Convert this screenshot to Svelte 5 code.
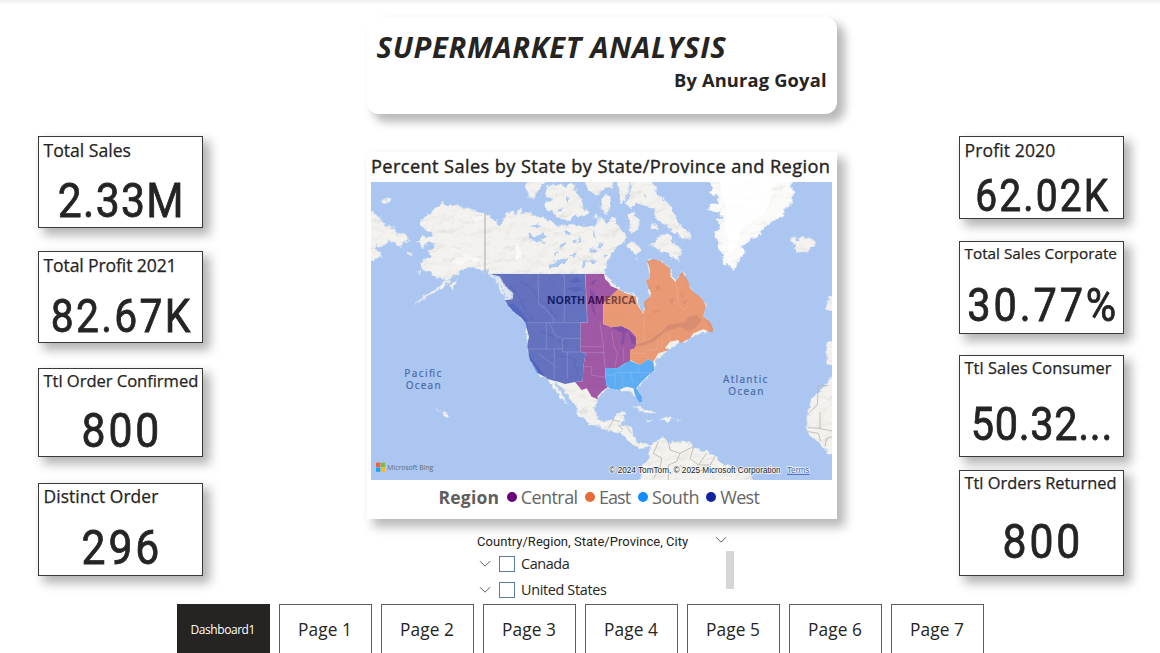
<script>
  // y positions: card top edge and height, label baseline, figure cap height and baseline
  const left = [
    { label: 'Total Sales', w: 87, size: 17.6, lb: 157, value: '2.33M', vw: 126, cap: 34.5, vb: 218.3, top: 136.4, h: 91.6 },
    { label: 'Total Profit 2021', w: 133, size: 17.6, lb: 272, value: '82.67K', vw: 140, cap: 33, vb: 332.3, top: 251.4, h: 91.6 },
    { label: 'Ttl Order Confirmed', w: 155, size: 16.6, lb: 387, value: '800', vw: 78, cap: 34.5, vb: 447.8, top: 367.6, h: 89.4 },
    { label: 'Distinct Order', w: 115, size: 17.4, lb: 503, value: '296', vw: 78, cap: 34.5, vb: 565.3, top: 483, h: 93 }
  ];
  const right = [
    { label: 'Profit 2020', w: 91, size: 17.6, lb: 157, value: '62.02K', vw: 133, cap: 31.5, vb: 211.3, top: 136.4, h: 82.6 },
    { label: 'Total Sales Corporate', w: 152, size: 15.3, lb: 259.3, value: '30.77%', vw: 149, cap: 33.5, vb: 321.5, top: 241.4, h: 92.6 },
    { label: 'Ttl Sales Consumer', w: 147, size: 16.4, lb: 374, value: '50.32...', vw: 142, cap: 33.5, vb: 440.5, top: 355.4, h: 101.6 },
    { label: 'Ttl Orders Returned', w: 152, size: 16.4, lb: 489, value: '800', vw: 78, cap: 34.5, vb: 558.5, top: 470.4, h: 105.2 }
  ];
  const legend = [
    { name: 'Central', color: '#6b007b', w: 57.5, m: 0 },
    { name: 'East', color: '#e66c37', w: 32, m: 7 },
    { name: 'South', color: '#118dff', w: 47.5, m: 7 },
    { name: 'West', color: '#12239e', w: 40, m: 7 }
  ];
  const places = [{ name: 'Canada', w: 49 }, { name: 'United States', w: 86 }];
  const pages = [1, 2, 3, 4, 5, 6, 7];

  // Spreads the letters so that the text takes the given width.
  function fit(node, { w, sx = 1 }) {
    const n = node.textContent.length;
    const ls = (w / sx - node.offsetWidth) / (n - 1);
    node.style.letterSpacing = ls + 'px';
    node.style.marginRight = -ls + 'px';
  }
  const gap = (list, i) => (i ? list[i].top - list[i - 1].top - list[i - 1].h : list[0].top);
  const labelTop = (c) => c.lb - c.top - 1 - 12 - 0.388 * c.size;
  const valueTop = (c) => c.vb - c.top - 1 - 24 - labelTop(c) - (0.8418 * c.cap) / 0.711;
</script>

{#snippet cards(list)}
  <div class="column">
    {#each list as c, i}
      <section class="card" style="margin-top:{gap(list, i)}px;height:{c.h}px">
        <div class="label" style="margin-top:{labelTop(c)}px;font-size:{c.size}px"><span use:fit={{ w: c.w }}>{c.label}</span></div>
        <div class="value" style="margin-top:{valueTop(c)}px;font-size:{c.cap / 0.711}px"><span use:fit={{ w: c.vw, sx: 0.88 }}>{c.value}</span></div>
      </section>
    {/each}
  </div>
{/snippet}

{#snippet chevron()}
  <svg class="chev" width="12" height="8" viewBox="0 0 12 8"><path d="M1 1.2 6 6.2 11 1.2" /></svg>
{/snippet}

<main>
  <div class="board">
    {@render cards(left)}

    <div class="center">
      <header>
        <h1><span use:fit={{ w: 349 }}>SUPERMARKET ANALYSIS</span></h1>
        <p><span use:fit={{ w: 152.5 }}>By Anurag Goyal</span></p>
      </header>

      <section class="mapcard">
        <h2><span use:fit={{ w: 459 }}>Percent Sales by State by State/Province and Region</span></h2>
        <svg class="map" width="461" height="298" viewBox="33 111 1383 894" preserveAspectRatio="none">
          <defs>
            <filter id="coast" x="-5%" y="-5%" width="110%" height="110%">
              <feTurbulence type="fractalNoise" baseFrequency="0.06" numOctaves="3" seed="4" result="n" />
              <feDisplacementMap in="SourceGraphic" in2="n" scale="20" xChannelSelector="R" yChannelSelector="G" />
            </filter>
            <filter id="relief" x="0" y="0" width="100%" height="100%">
              <feTurbulence type="fractalNoise" baseFrequency="0.018 0.035" numOctaves="3" seed="9" result="t" />
              <feDiffuseLighting in="t" surfaceScale="9" diffuseConstant="1.08" lighting-color="#ffffff" result="l">
                <feDistantLight azimuth="235" elevation="65" />
              </feDiffuseLighting>
              <feComposite in="l" in2="SourceAlpha" operator="in" />
            </filter>
            <g id="land">
              <path d="M20 195 60 215 75 240 100 250 110 265 135 265 148 280 140 290 125 290 130 303 115 305 100 290 85 285 75 300 60 308 50 300 40 308 65 325 65 340 20 350ZM62 170 75 160 90 168 80 175Z" />
              <path d="M178 230 195 220 205 205 225 195 240 182 250 170 262 182 290 180 320 190 350 200 375 207 395 215 410 235 425 245 430 225 440 205 455 200 465 210 480 190 490 205 515 200 520 215 550 215 575 235 610 243 640 240 660 245 690 240 705 240 712 222 722 215 740 235 755 222 768 218 770 240 790 262 800 272 790 290 770 305 755 330 740 345 735 387 735 400 400 400 385 380 360 377 340 367 325 370 300 377 295 390 280 394 265 405 250 400 235 402 225 398 215 385 190 375 180 355 195 345 215 335 205 320 225 300 210 290 190 305 170 290 185 275 205 280 220 270 205 255 185 245Z" />
              <path d="M265 403 270 412 250 428 225 440 195 460 160 481 190 455 225 432 248 410ZM268 420 285 405 288 420 275 432ZM170 380 182 376 180 386ZM135 325 155 322 158 330 145 332Z" />
              <path d="M500 105 560 105 545 125 535 140 525 145 520 165 505 155 497 135ZM555 150 565 120 600 118 615 125 635 111 650 135 665 165 670 190 690 200 675 215 650 210 630 225 600 225 580 205 560 195 555 175 575 165ZM675 105 765 105 755 125 735 130 715 150 700 145 680 130ZM725 160 740 145 752 165 752 185 738 208 722 195ZM700 205 716 210 712 225 700 220ZM775 105 810 105 805 140 795 165 785 180 775 160Z" />
              <path d="M815 105 870 105 885 130 895 150 915 165 930 180 940 190 935 205 955 225 960 240 975 255 990 262 985 280 970 285 955 265 935 260 930 245 905 235 890 215 880 195 850 180 830 175 815 190 800 175 810 150ZM805 215 820 200 835 225 835 255 815 265 805 245ZM800 300 815 285 835 305 845 320 825 330 805 310ZM825 340 832 336 830 345ZM873 237 892 235 890 255 875 255ZM865 300 890 290 905 265 930 270 945 300 965 310 965 325 950 335 960 345 935 340 925 325 905 320 885 303Z" />
              <path class="ice" d="M1045 105H1295L1300 150 1295 180 1280 190 1270 215 1250 220 1230 235 1210 250 1195 275 1170 285 1150 300 1155 325 1140 340 1130 365 1120 375 1105 360 1090 355 1085 330 1075 310 1080 290 1060 275 1065 260 1080 255 1072 225 1085 220 1080 200 1060 205 1045 190 1055 175 1075 170 1070 150 1050 145 1060 130Z" />
              <path d="M1292 280 1305 275 1308 285 1325 280 1345 275 1360 282 1367 295 1355 310 1330 325 1310 320 1300 308 1305 297 1290 290ZM1397 475 1410 455 1430 455V495H1402ZM1400 595 1430 590V660L1400 655Z" />
              <path d="M400 387 735 387 780 435 830 455 850 507 870 455 860 408 870 400 862 348 900 347 930 370 947 412 967 381 990 430 1037 480 1030 515 1060 553 990 580 925 610 883 655 883 675 828 730 847 770 825 750 775 733 742 727 714 763 705 790 710 815 735 830 760 825 768 805 793 802 790 820 785 838 815 845 820 870 835 895 860 895 868 907 840 912 805 890 785 865 750 857 690 838 650 805 650 785 625 755 600 725 580 708 612 755 622 782 605 765 585 735 565 703 535 685 503 620 498 535 440 475Z" />
              <path d="M868 900 895 882 910 880 930 890 980 890 1000 905 1040 922 1070 935 1080 955 1130 970 1170 990 1190 1020H835L845 985 850 960 868 935ZM1430 690 1405 700 1400 720 1375 738 1355 765 1340 805 1342 850 1345 868 1375 892 1400 918 1430 940Z" />
              <path d="M815 784 845 786 875 798 892 807 870 808 845 797ZM900 824 920 812 945 820 925 829ZM862 823 880 825 865 830ZM953 823 963 827 953 829ZM248 800 256 802 268 813 260 819ZM228 793 236 796 230 798Z" />
            </g>
          </defs>
          <rect x="33" y="111" width="1383" height="894" fill="#abc7f1" />
          <g filter="url(#coast)">
            <use href="#land" fill="#f3f2ee" stroke="#c4d6f2" stroke-width="2" />
            <use href="#land" filter="url(#relief)" style="mix-blend-mode:multiply" opacity=".28" />
            <path d="M1080 105H1255L1235 150 1225 190 1190 220 1150 250 1130 300 1105 335 1100 280 1095 240 1100 190 1088 150Z" fill="#fff" opacity=".85" />
            <path d="M335 222 375 208 378 218 345 232ZM465 290 480 300 485 340 468 345ZM275 350 320 325 360 345 370 358 330 345 290 362Z" fill="#fff" opacity=".55" />
            <g fill="#aec9f1">
              <path d="M505 265 525 275 550 262 560 275 540 285 555 298 525 290 500 275ZM515 240 530 235 545 243 530 250ZM565 360 590 345 625 340 620 352 595 360 570 375ZM600 300 612 285 618 300 605 310ZM655 270 665 290 655 300ZM610 255 635 260 620 270ZM630 330 650 322 640 338ZM690 310 712 318 700 325ZM680 350 715 345 700 355ZM715 290 728 300 718 308ZM665 370 675 340 680 365ZM700 262 710 268 700 275Z" />
              <path d="M590 195 610 190 605 200ZM850 145 865 160 855 162ZM620 150 628 170 618 165ZM730 330 745 326 735 340ZM583 325 592 318 590 335ZM640 290 648 280 650 295Z" />
            </g>
          </g>
          <g class="borders">
            <path d="M375 207V378" stroke="#a9a9a7" stroke-width="3" />
            <path d="M745 850 760 825 780 830M790 855 775 840M800 845 815 865M895 890 880 925 905 940 900 970 880 1000M925 890 930 915 960 925 1000 905M960 925 950 950 925 960 925 1005M1000 910 990 940 1015 960 1040 925M1015 960 1050 960 1065 935M960 960 990 980 1030 975" />
            <path d="M1405 722H1375L1372 780 1345 805M1380 800V850L1345 848M1345 860 1375 865 1382 890M1375 850 1416 858M1395 905 1400 880 1416 875" />
          </g>

          <g opacity=".82">
            <path fill="#4656b6" d="M390 387H676L682 533H662V621L677 623 670 665 668 709 645 711 615 717 595 710 565 703 555 695 535 685 525 665 510 645 505 620 502 600 507 575 500 550 498 535 480 515 460 500 440 475 435 465 457 463 460 445 435 425 420 395Z" />
            <path fill="#8f3896" d="M676 387H732L735 402 748 415 752 423 775 433 730 475V537L755 547 785 543 810 555 828 575 830 600 822 612 810 615V650L795 655 772 670H735L738 715 742 727 725 740 712 755 714 763 695 755 680 730 665 735 655 723 645 711 668 709 670 665 677 623 662 621V533H682Z" />
            <path fill="#e8875a" d="M775 433 795 445 815 450 828 455 830 475 842 495 850 507 855 490 852 470 870 455 873 445 865 425 858 408 870 400V375L862 348 880 343 900 347 912 357 930 370 932 395 947 412 960 390 967 381 985 410 990 430 1005 445 1025 460 1037 480 1030 515 1050 530 1060 553 1057 563 1030 553 1000 565 990 580 960 595 955 585 930 590 915 608 925 615 895 625 880 650 865 643 840 660 810 645V615L822 612 830 600 828 575 810 555 785 543 755 547 730 537V475Z" />
            <path fill="#3d9ff7" d="M810 647 840 660 865 643 880 650 883 675 860 695 845 710 828 730 845 755 847 770 838 772 825 750 820 730 800 725 775 735 742 727 738 715 735 668 772 670 795 655Z" />
          </g>
          <path d="M440 480 460 475 485 500 503 528 500 545 490 520 465 500ZM505 625 520 650 540 672 555 695 530 683 510 645Z" fill="#3f5bc4" opacity=".45" />
          <path d="M755 547 785 543 808 558 795 565 792 595 783 600 788 565ZM805 560 826 576 828 598 815 595ZM690 430 705 445 700 480 710 515 695 495ZM690 412 710 402 700 420Z" fill="#5c3aa6" opacity=".35" />
          <path d="M825 600 870 585 905 560 925 540 975 530 985 515 1010 510 1025 525 1005 550 985 560 960 545 915 560 880 590 840 605Z" fill="#a8686c" opacity=".25" />
          <path d="M625 410 650 395 665 410 645 415ZM620 430 655 425 670 435 640 440Z" fill="#3448b0" opacity=".25" />
          <path d="M885 425 900 418 895 440ZM925 465 945 460 935 480ZM960 440 975 460 965 455ZM965 470 980 465 975 480ZM875 500 900 495 890 505Z" fill="#a8686c" opacity=".2" />
          <path class="shade" d="M485 410 515 430 530 455 560 480 590 520M450 420 480 460 500 500 520 525M545 560 580 575 620 600M520 655 550 690M590 630 640 640 655 690" />
          <path class="states" d="M498 533H682M534 387 536 475 560 495 580 520 580 533M613 387V533M676 387 682 533M559 533V612M503 612H607M568 533 580 560 590 580 605 572M607 580H662M607 580V621H662M583 612V660L582 700M622 621V700M583 662 535 625M662 605H725M677 623H735M670 665H695M720 533 730 600 735 668M755 560 762 605 772 625 765 668M790 610V650M695 665V690L735 697M735 690H765M765 683V727M785 685 790 727M810 680 820 715M770 683H880M795 655 770 683M830 665 840 685M810 625H860M850 615H890L895 590M855 630 870 645M905 580V610M925 565 930 590M852 507V590M950 430 955 480 975 495 985 480M950 430 945 412" />
          <path class="bc" d="M403 392 418 396 428 413 442 430 457 444 455 460 440 458 430 443 424 424 408 412Z" />

          <g class="name" font-size="34">
            <text x="561" y="478" textLength="114" lengthAdjust="spacingAndGlyphs">NORTH</text>
            <text x="683" y="478" textLength="50" lengthAdjust="spacingAndGlyphs" fill="#40104f">AM</text>
            <text x="734" y="478" textLength="93" lengthAdjust="spacingAndGlyphs" fill="#7c4440">ERICA</text>
          </g>
          <g class="sea" font-size="30">
            <text x="133" y="696" textLength="111">Pacific</text>
            <text x="137" y="733" textLength="105">Ocean</text>
            <text x="1089" y="713" textLength="133">Atlantic</text>
            <text x="1105" y="750" textLength="105">Ocean</text>
          </g>
          <path fill="#f2603a" d="M48 953h13v13H48z" /><path fill="#84bb3c" d="M62.500 953h13v13h-13z" />
          <path fill="#1da4ec" d="M48 967.500h13v13H48z" /><path fill="#fbb91b" d="M62.500 967.500h13v13h-13z" />
          <text class="bing" x="82" y="975" font-size="23.500" textLength="138" lengthAdjust="spacingAndGlyphs">Microsoft Bing</text>
          <g class="copy" font-size="25">
            <text x="748" y="984" textLength="514" lengthAdjust="spacingAndGlyphs">© 2024 TomTom, © 2025 Microsoft Corporation</text>
            <text x="1281" y="984" textLength="67" lengthAdjust="spacingAndGlyphs" class="terms">Terms</text>
          </g>
          <path d="M1281 988H1348" stroke="#3f62b8" stroke-width="3" />
        </svg>
        <div class="legend">
          <b><span use:fit={{ w: 60 }}>Region</span></b>
          {#each legend as item}
            <i style="background:{item.color};margin-left:{item.m}px"></i><span class="item" style="width:{item.w}px"><span use:fit={{ w: item.w }}>{item.name}</span></span>
          {/each}
        </div>
      </section>

      <section class="slicer">
        <div class="head"><span class="title"><span use:fit={{ w: 211.5 }}>Country/Region, State/Province, City</span></span>{@render chevron()}</div>
        <div class="body">
          <ul>
            {#each places as p}
              <li>{@render chevron()}<span class="box"></span><span use:fit={{ w: p.w }}>{p.name}</span></li>
            {/each}
          </ul>
          <div class="scroll"></div>
        </div>
      </section>
    </div>

    {@render cards(right)}
  </div>

  <nav>
    <button class="active"><span use:fit={{ w: 65 }}>Dashboard1</span></button>
    {#each pages as n}
      <button><span use:fit={{ w: 53.5 }}>Page {n}</span></button>
    {/each}
  </nav>
</main>

<style>
  :global(body) { margin: 0; background: #fff; }
  main {
    width: 1160px; height: 653px; overflow: hidden; display: flex; flex-direction: column;
    background: linear-gradient(#ececec, #fff 4px); color: #252423;
    font-family: 'Open Sans', 'Noto Sans', sans-serif; white-space: nowrap;
  }
  main span { display: inline-block; }
  .board { height: 604px; flex: none; display: flex; padding-left: 38px; }
  .column { width: 165px; flex: none; display: flex; flex-direction: column; }
  .card {
    box-sizing: border-box; flex: none; border: 1px solid #3b3a39; background: #fff;
    box-shadow: 6px 6px 10px 1px rgba(0, 0, 0, .3);
  }
  .label { height: 24px; line-height: 24px; padding-left: 4.500px; -webkit-text-stroke: .25px #252423; }
  .value { line-height: 1; display: flex; justify-content: center; font-family: Roboto, sans-serif; font-weight: 400; -webkit-text-stroke: .8px #252423; }
  .value span { transform: scaleX(.88); }

  .center { width: 470px; flex: none; margin: 0 122px 0 164px; display: flex; flex-direction: column; }
  header {
    box-sizing: border-box; height: 97.500px; margin-top: 16.500px; flex: none; border-radius: 12px; background: #fff;
    padding: 10px 10.500px 0 9.500px; box-shadow: 7px 7px 10px 1px rgba(0, 0, 0, .28);
  }
  h1 { margin: 0; font-size: 29.200px; line-height: 40px; font-weight: 700; font-style: italic; }
  p { margin: 3px 0 0; font-size: 18.300px; line-height: 20px; font-weight: 700; text-align: right; }
  .mapcard {
    box-sizing: border-box; height: 366.500px; margin-top: 38px; flex: none; background: #fff;
    padding: 3px 0 0 4px; box-shadow: 7px 7px 10px 1px rgba(0, 0, 0, .28);
  }
  h2 { margin: 0; height: 27px; line-height: 22px; font-size: 18.200px; font-weight: 400; -webkit-text-stroke: .4px #252423; }
  .map { display: block; }
  .ice { fill: #fbfbfa; }
  .borders { fill: none; stroke: #b9b6ae; stroke-width: 2.500; }
  .name { font-weight: 700; fill: #151e66; }
  .states { fill: none; stroke: #d5cde8; stroke-width: 2; opacity: .35; }
  .shade { fill: none; stroke: #2c3f9c; stroke-width: 4; opacity: .12; }
  .bc { fill: #dfe6ef; stroke: #b4c9ec; stroke-width: 4; stroke-dasharray: 8 5; }
  .sea { font-family: 'Noto Sans', 'Open Sans', sans-serif; fill: #4d6dab; stroke: #4d6dab; stroke-width: .6; }
  .bing { fill: #686868; }
  .copy { font-family: 'Liberation Sans', Arial, sans-serif; fill: #222; stroke: #f5f7fa; stroke-width: 4; paint-order: stroke; }
  .terms { fill: #3f62b8; }

  .legend { display: flex; align-items: center; height: 34px; padding-left: 67.500px; font-size: 18px; color: #666; }
  .legend b { width: 60px; margin-right: 8.500px; font-size: 17.500px; color: #605e5c; }
  .legend i { width: 10px; height: 10px; border-radius: 50%; margin-right: 3.800px; flex: none; }
  .item { flex: none; }

  .slicer { margin: 12px 0 0 110px; height: 72px; }
  .head { display: flex; height: 20px; font: 400 13px/21px Roboto, sans-serif; }
  .title { width: 238px; }
  .head .chev { margin-top: 5px; }
  .chev { flex: none; fill: none; stroke: #605e5c; stroke-width: 1; }
  .body { display: flex; width: 257px; justify-content: space-between; }
  ul { margin: 0; padding: 0 0 0 2px; list-style: none; }
  li { display: flex; align-items: center; height: 26px; font-size: 14.400px; }
  .box { box-sizing: border-box; width: 16px; height: 16px; margin: 0 6px 0 8px; border: 1px solid #5b7fa3; }
  .scroll { width: 8px; height: 38px; background: #d6d6d6; }

  nav { display: flex; gap: 9px; padding-left: 176.500px; height: 49px; }
  button {
    box-sizing: border-box; width: 93px; height: 51px; flex: none; padding: 0 0 1px; border: 1px solid #605e5c;
    background: #fff; color: #252423; font: 400 17.300px 'Open Sans', sans-serif;
  }
  .active { background: #252423; border-color: #252423; color: #fff; font-size: 12px; }
</style>
